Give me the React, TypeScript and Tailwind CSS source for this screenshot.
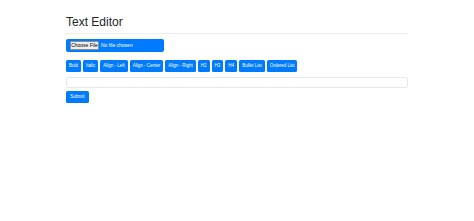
const tools = [
  "Bold",
  "Italic",
  "Align - Left",
  "Align - Center",
  "Align - Right",
  "H2",
  "H3",
  "H4",
  "Bullet List",
  "Ordered List",
];

export default function App() {
  return (
    <div className="min-h-screen w-full bg-white font-['Liberation_Sans',Arial,sans-serif] text-[#212529]">
      <div className="mx-auto w-[342px] pt-[15px]">
        <h1 className="text-[12px] leading-[14px] font-normal">Text Editor</h1>
        <hr className="mt-[4px] border-t border-[#eceff2]" />

        <div className="mt-[5px] flex h-[13px] w-[98px] items-center rounded-[2px] bg-[#007bff] pl-[4px]">
          <span className="flex h-[9px] w-[29px] items-center justify-center rounded-[1px] border border-[#8f8f8f] bg-[#efefef] text-[5px] leading-none text-black">
            Choose File
          </span>
          <span className="ml-[2px] text-[5px] leading-none text-white">No file chosen</span>
        </div>

        <div className="mt-[8px] flex gap-[2px]">
          {tools.map((t) => (
            <button
              key={t}
              type="button"
              className="flex h-[12px] items-center rounded-[1.5px] bg-[#007bff] px-[3px] text-[4.5px] leading-none whitespace-nowrap text-white"
            >
              {t}
            </button>
          ))}
        </div>

        <div className="mt-[5px] h-[11px] w-full rounded-[2px] border border-[#e6e9ec] bg-white" />

        <button
          type="button"
          className="mt-[3px] flex h-[12px] w-[23px] items-center justify-center rounded-[1.5px] bg-[#007bff] text-[4.6px] leading-none text-white"
        >
          Submit
        </button>
      </div>
    </div>
  );
}
